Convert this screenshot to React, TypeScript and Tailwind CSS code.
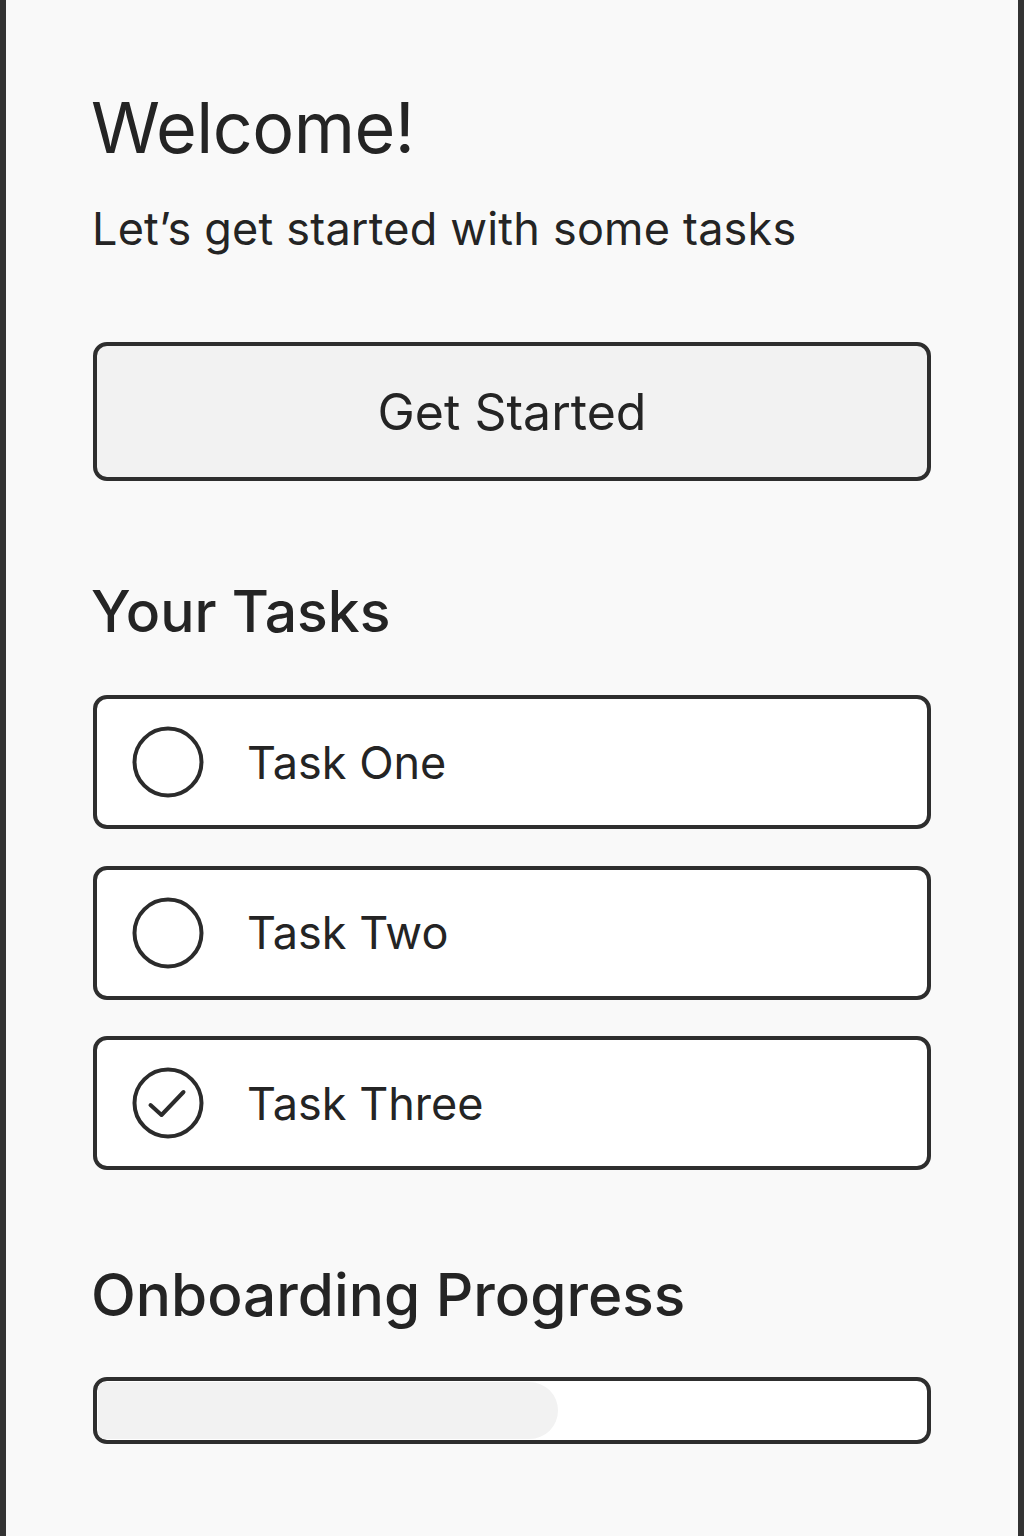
import React from 'react';

interface Task {
  label: string;
  done: boolean;
}

const tasks: Task[] = [
  { label: 'Task One', done: false },
  { label: 'Task Two', done: false },
  { label: 'Task Three', done: true },
];

const progress = 55.5;

const TaskIcon: React.FC<{ done: boolean }> = ({ done }) => (
  <svg width="72" height="72" viewBox="0 0 72 72" fill="none" className="shrink-0">
    <circle cx="36" cy="36" r="33.5" stroke="#2b2b2b" strokeWidth="4" />
    {done && (
      <polyline
        points="18.5,38 29.5,48 51.5,25"
        stroke="#2b2b2b"
        strokeWidth="4"
        strokeLinecap="round"
        strokeLinejoin="round"
      />
    )}
  </svg>
);

export default function App() {
  return (
    <div className="w-[1024px] h-[1536px] bg-[#f9f9f9] border-x-[6px] border-[#333333] px-[87px] pt-[93px] text-[#242424] font-['Inter',sans-serif] overflow-hidden">
      <h1 className="-ml-[2px] text-[70px] leading-none font-normal tracking-[-0.5px]">Welcome!</h1>
      <p className="-ml-[1px] mt-[43px] text-[45px] leading-none tracking-[0.2px]">Let’s get started with some tasks</p>

      <button className="mt-[91px] w-full h-[139px] bg-[#f2f2f2] border-4 border-[#2e2e2e] rounded-[14px] text-[50px] leading-none flex items-center justify-center">
        Get Started
      </button>

      <h2 className="-ml-[2px] mt-[102px] text-[57px] leading-none font-medium">Your Tasks</h2>

      <ul className="mt-[55px] flex flex-col gap-[36.5px]">
        {tasks.map((t) => (
          <li
            key={t.label}
            className="h-[134px] bg-white border-4 border-[#2e2e2e] rounded-[14px] flex items-center pl-[35px] gap-[43px]"
          >
            <TaskIcon done={t.done} />
            <span className="text-[45px] leading-none">{t.label}</span>
          </li>
        ))}
      </ul>

      <h2 className="-ml-[2px] mt-[96px] text-[58.5px] leading-none font-medium">Onboarding Progress</h2>

      <div className="mt-[52px] h-[67px] bg-white border-4 border-[#2e2e2e] rounded-[14px] overflow-hidden p-[1px]">
        <div className="h-full bg-[#f2f2f2] rounded-r-full rounded-l-[10px]" style={{ width: `${progress}%` }} />
      </div>
    </div>
  );
}
